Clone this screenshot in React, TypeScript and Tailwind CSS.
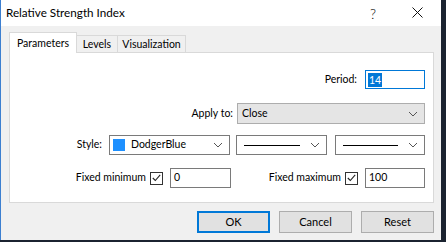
const FONT = "font-['Lato',sans-serif]";

function Chevron() {
  return (
    <svg width="10" height="6" viewBox="0 0 10 6" className="shrink-0">
      <path d="M1 1 L5 5 L9 1" fill="none" stroke="#555" strokeWidth="1" />
    </svg>
  );
}

function Check() {
  return (
    <span className="flex h-[13px] w-[13px] items-center justify-center border border-[#333] bg-white">
      <svg width="9" height="8" viewBox="0 0 9 8">
        <path d="M0.8 4 L3.3 6.5 L8.2 0.8" fill="none" stroke="#222" strokeWidth="1.1" />
      </svg>
    </span>
  );
}

function LineSelect({ width }: { width: string }) {
  return (
    <div className={`flex h-[20px] ${width} items-center border border-[#7a7a7a] bg-white pl-[7px] pr-[6px]`}>
      <span className="h-[1px] flex-1 bg-black" />
      <span className="ml-[10px]">
        <Chevron />
      </span>
    </div>
  );
}

export default function App() {
  return (
    <div className={`flex h-[242px] w-[446px] bg-[#1b2330] text-[10.5px] text-black ${FONT}`}>
      <div className="flex h-[240px] w-[441px] flex-col border-l border-[#3c7fd0] bg-[#f0f0f0]">
        {/* title bar */}
        <div className="flex h-[26px] items-center bg-white pl-[5px]">
          <span className="text-[11.7px]">Relative Strength Index</span>
          <span className="ml-auto mr-[36px] text-[14px] font-light">?</span>
          <svg width="11" height="11" viewBox="0 0 11 11" className="mr-[18px] mt-[-2px]">
            <path d="M0.5 0.5 L10.5 10.5 M10.5 0.5 L0.5 10.5" stroke="#111" strokeWidth="1" />
          </svg>
        </div>

        {/* tabs */}
        <div className="ml-[8px] mt-[7px] flex h-[20px] items-end whitespace-nowrap">
          <div className="relative z-10 flex h-[21px] w-[68px] items-start justify-center border border-b-0 border-[#d9d9d9] bg-white pt-[3px]">
            Parameters
          </div>
          <div className="flex h-[18px] w-[41px] items-center justify-center border border-b-0 border-l-0 border-[#d9d9d9] bg-[#f0f0f0] pt-[1px]">
            Levels
          </div>
          <div className="flex h-[18px] w-[68px] items-center justify-center border border-b-0 border-l-0 border-[#d9d9d9] bg-[#f0f0f0] pt-[1px]">
            Visualization
          </div>
        </div>

        {/* panel */}
        <div className="mx-[8px] mt-[-1px] flex h-[151px] w-[425px] flex-col border border-[#d9d9d9] bg-white pr-[8px]">
          <div className="mt-[17px] flex items-center justify-end">
            <span>Period:</span>
            <div className="ml-[8px] flex h-[19px] w-[60px] items-center border border-[#0078d7] pl-[2px]">
              <span className="bg-[#0078d7] px-[1px] leading-[14px] text-white">14</span>
            </div>
          </div>

          <div className="mt-[14px] flex items-center justify-end">
            <span>Apply to:</span>
            <div className="ml-[4px] flex h-[21px] w-[188px] items-center border border-[#adadad] bg-[#e5e5e5] pl-[4px] pr-[6px]">
              <span className="flex-1">Close</span>
              <Chevron />
            </div>
          </div>

          <div className="mt-[11px] flex items-center justify-end">
            <span>Style:</span>
            <div className="ml-[7px] flex h-[20px] w-[121px] items-center border border-[#7a7a7a] bg-white pl-[3px] pr-[6px]">
              <span className="h-[12px] w-[12px] bg-[#1e90ff]" />
              <span className="ml-[6px] flex-1">DodgerBlue</span>
              <Chevron />
            </div>
            <div className="ml-[6px]">
              <LineSelect width="w-[91px]" />
            </div>
            <div className="ml-[8px]">
              <LineSelect width="w-[90px]" />
            </div>
          </div>

          <div className="mt-[13px] flex items-center justify-end">
            <div className="flex items-center">
              <span>Fixed minimum</span>
              <span className="ml-[4px]">
                <Check />
              </span>
              <div className="ml-[7px] flex h-[20px] w-[61px] items-center border border-[#7a7a7a] pl-[3px]">0</div>
            </div>
            <div className="flex w-[194px] items-center justify-end">
              <span>Fixed maximum</span>
              <span className="ml-[4px]">
                <Check />
              </span>
              <div className="ml-[7px] flex h-[20px] w-[60px] items-center border border-[#7a7a7a] pl-[3px]">100</div>
            </div>
          </div>
        </div>

        {/* buttons */}
        <div className="mt-[8px] flex justify-end gap-[9px] pr-[7px] text-[11px]">
          <button className="h-[22px] w-[73px] border-2 border-[#0078d7] bg-[#e1e1e1]">OK</button>
          <button className="h-[22px] w-[73px] border border-[#adadad] bg-[#e1e1e1]">Cancel</button>
          <button className="h-[22px] w-[73px] border border-[#adadad] bg-[#e1e1e1]">Reset</button>
        </div>
      </div>
    </div>
  );
}
